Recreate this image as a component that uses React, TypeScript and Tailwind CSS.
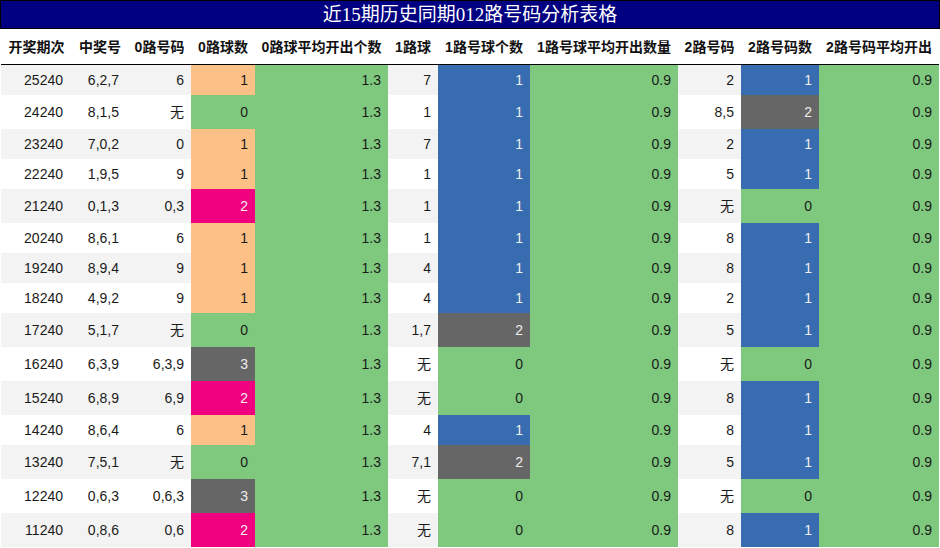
import React from "react";

type Row = [string, string, string, number, string, number, string, number];

const rows: Row[] = [
  ["25240", "6,2,7", "6", 1, "7", 1, "2", 1],
  ["24240", "8,1,5", "无", 0, "1", 1, "8,5", 2],
  ["23240", "7,0,2", "0", 1, "7", 1, "2", 1],
  ["22240", "1,9,5", "9", 1, "1", 1, "5", 1],
  ["21240", "0,1,3", "0,3", 2, "1", 1, "无", 0],
  ["20240", "8,6,1", "6", 1, "1", 1, "8", 1],
  ["19240", "8,9,4", "9", 1, "4", 1, "8", 1],
  ["18240", "4,9,2", "9", 1, "4", 1, "2", 1],
  ["17240", "5,1,7", "无", 0, "1,7", 2, "5", 1],
  ["16240", "6,3,9", "6,3,9", 3, "无", 0, "无", 0],
  ["15240", "6,8,9", "6,9", 2, "无", 0, "8", 1],
  ["14240", "8,6,4", "6", 1, "4", 1, "8", 1],
  ["13240", "7,5,1", "无", 0, "7,1", 2, "5", 1],
  ["12240", "0,6,3", "0,6,3", 3, "无", 0, "无", 0],
  ["11240", "0,8,6", "0,6", 2, "无", 0, "8", 1],
];

const headers = [
  "开奖期次",
  "中奖号",
  "0路号码",
  "0路球数",
  "0路球平均开出个数",
  "1路球",
  "1路号球个数",
  "1路号球平均开出数量",
  "2路号码",
  "2路号码数",
  "2路号码平均开出",
];

const GREEN = "bg-[#7fc97f] text-[#1a1a1a]";
const ORANGE = "bg-[#fdc086] text-[#1a1a1a]";
const BLUE = "bg-[#386cb0] text-[#eeeeee]";
const PINK = "bg-[#f0027f] text-[#eeeeee]";
const GRAY = "bg-[#666666] text-[#eeeeee]";

function zeroColor(n: number) {
  if (n === 0) return GREEN;
  if (n === 1) return ORANGE;
  if (n === 2) return PINK;
  return GRAY;
}
function otherColor(n: number) {
  if (n === 0) return GREEN;
  if (n === 1) return BLUE;
  return GRAY;
}

const font = {
  fontFamily: '"Liberation Sans", "Noto Sans CJK SC", sans-serif',
};

export default function App() {
  return (
    <div className="w-[940px] bg-white" style={font}>
      <div
        className="h-[29px] border border-black bg-[#000080] text-white flex items-center justify-center text-[19px] leading-none"
        style={{ fontFamily: '"Liberation Serif", "Noto Sans CJK SC", serif' }}
      >
        近15期历史同期012路号码分析表格
      </div>
      <div className="px-[1px]">
        <div className="grid grid-cols-[71px_56px_63px_64px_133px_50px_92px_148px_63px_78px_120px] text-[14px] leading-none">
          {headers.map((h) => (
            <div
              key={h}
              className="h-[36px] border-b border-black flex items-center justify-center font-bold text-[#111] whitespace-nowrap"
            >
              {h}
            </div>
          ))}
          {rows.map((r, i) => {
            const tall = r.some((v) => v === "无");
            const h = tall ? "h-[34px]" : "h-[30px]";
            const stripe = i % 2 === 0 ? "bg-[#f3f3f3] text-[#1a1a1a]" : "bg-white text-[#1a1a1a]";
            const cell = `${h} flex items-center justify-end pr-[7px] whitespace-nowrap`;
            return (
              <React.Fragment key={r[0]}>
                <div className={`${cell} pr-[9px] ${stripe}`}>{r[0]}</div>
                <div className={`${cell} pr-[9px] ${stripe}`}>{r[1]}</div>
                <div className={`${cell} ${stripe}`}>{r[2]}</div>
                <div className={`${cell} ${zeroColor(r[3])}`}>{r[3]}</div>
                <div className={`${cell} ${GREEN}`}>1.3</div>
                <div className={`${cell} ${stripe}`}>{r[4]}</div>
                <div className={`${cell} ${otherColor(r[5])}`}>{r[5]}</div>
                <div className={`${cell} ${GREEN}`}>0.9</div>
                <div className={`${cell} ${stripe}`}>{r[6]}</div>
                <div className={`${cell} ${otherColor(r[7])}`}>{r[7]}</div>
                <div className={`${cell} ${GREEN}`}>0.9</div>
              </React.Fragment>
            );
          })}
        </div>
      </div>
    </div>
  );
}
